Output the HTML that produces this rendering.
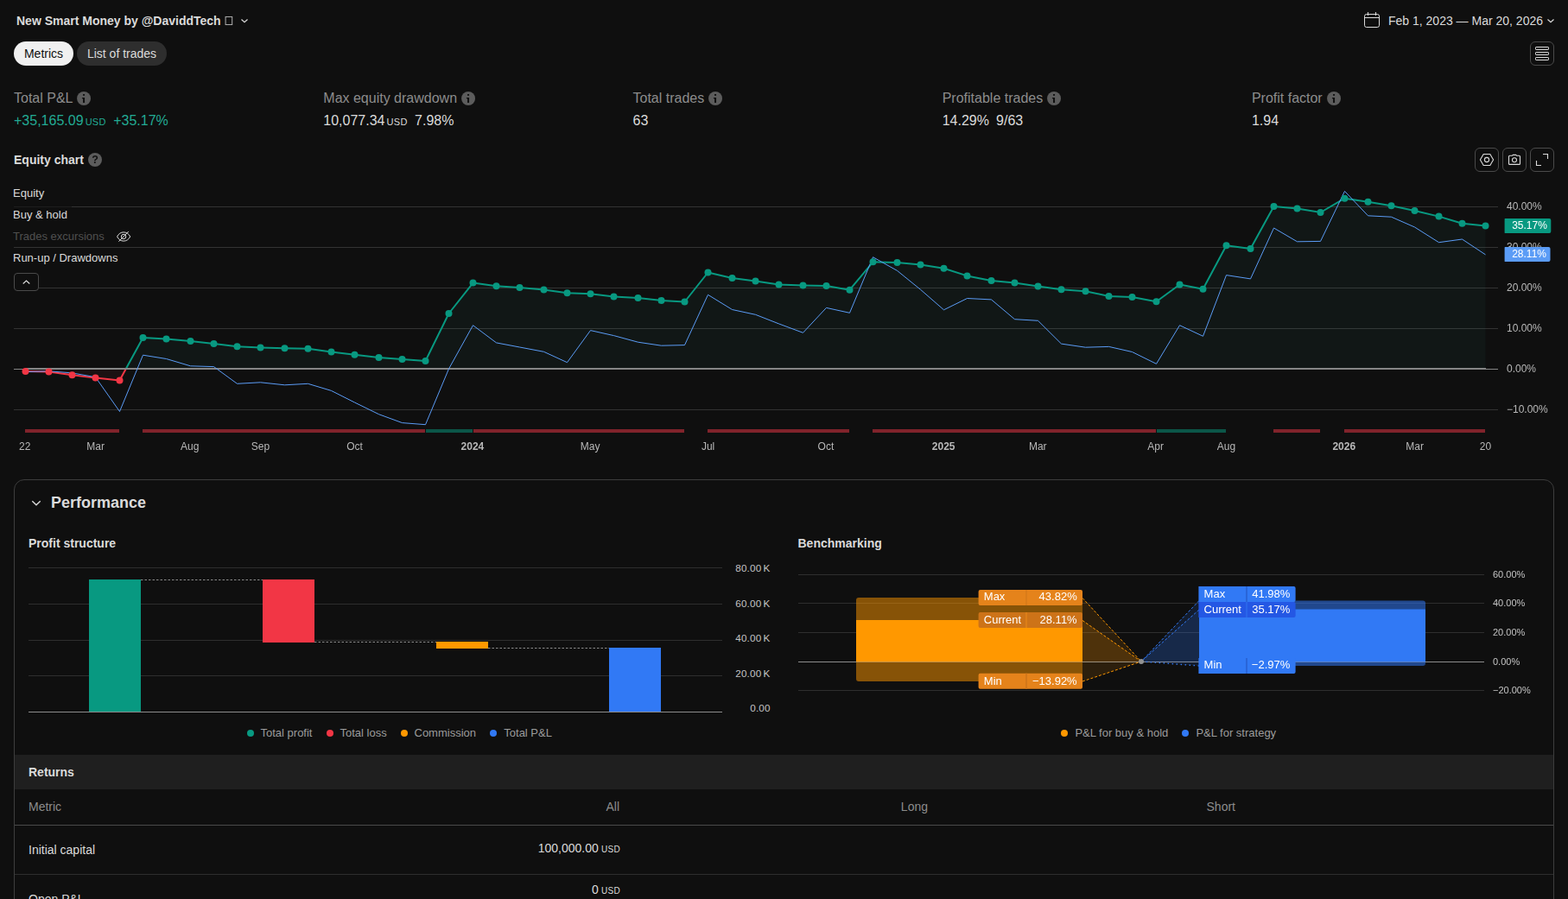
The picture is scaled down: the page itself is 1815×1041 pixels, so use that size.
<!DOCTYPE html>
<html lang="en"><head><meta charset="utf-8"><title>Strategy report</title>
<style>
*{box-sizing:border-box;margin:0;padding:0}
html,body{width:1815px;height:1041px;overflow:hidden;background:#0f0f0f;color:#dbdbdb;font-family:"Liberation Sans",sans-serif;}
body{position:relative}
.abs{position:absolute}
.gl{will-change:transform}
svg text{font-family:"Liberation Sans",sans-serif}
.t{position:absolute;white-space:nowrap;line-height:1}
.title{left:19px;top:17px;font-size:14px;font-weight:700;color:#dbdbdb}
.pill{position:absolute;top:48px;height:28px;border-radius:14px;font-size:14px;line-height:28px;text-align:center}
.lab{font-size:16px;color:#8c8c8c}
.val{font-size:16px;color:#dbdbdb}
.cur{font-size:11px;letter-spacing:.3px;margin-left:2.1px}
.pc{margin-left:8.4px}
.grn{color:#22ab94}
.btn{position:absolute;width:28px;height:28px;border:1px solid #4a4a4a;border-radius:6px}
.leg{font-size:13px;color:#dbdbdb}
.h2{font-size:14px;font-weight:700;color:#dbdbdb}
.lg{font-size:13px;color:#9c9c9c}
.dot{position:absolute;width:8.4px;height:8.4px;border-radius:50%}
.th{font-size:14px;color:#8c8c8c}
.td{font-size:14px;color:#dbdbdb}
</style></head><body>
<div class="t title">New Smart Money by @DaviddTech</div>
<svg class="abs" style="left:258px;top:16px" width="14" height="16" viewBox="0 0 14 16"><rect x="3.1" y="3.45" width="7.6" height="9.1" fill="none" stroke="#b0b0b0" stroke-width="1"/></svg>
<svg class="abs" style="left:277px;top:18px" width="12" height="12" viewBox="0 0 12 12"><path d="M2.5 4.5 6 7.7 9.5 4.5" fill="none" stroke="#dbdbdb" stroke-width="1.2"/></svg>
<div class="pill" style="left:16px;width:69px;background:#f0f0f0;color:#0f0f0f">Metrics</div>
<div class="pill" style="left:89px;width:104px;background:#2e2e2e;color:#dbdbdb">List of trades</div>

<svg class="abs" style="left:1577px;top:12px" width="22" height="22" viewBox="0 0 22 22"><g fill="none" stroke="#dbdbdb" stroke-width="1"><rect x="2.5" y="4.5" width="17" height="15" rx="2.2"/><path d="M2.5 8.5h17M6.5 2v4M15.5 2v4"/></g></svg>
<div class="t" style="left:1607px;top:17px;font-size:14px;color:#dbdbdb">Feb 1, 2023 — Mar 20, 2026</div>
<svg class="abs" style="left:1789px;top:18px" width="12" height="12" viewBox="0 0 12 12"><path d="M2.5 4.5 6 7.7 9.5 4.5" fill="none" stroke="#dbdbdb" stroke-width="1.2"/></svg>
<div class="btn" style="left:1771px;top:48px"><svg width="26" height="26" viewBox="0 0 26 26"><g fill="none" stroke="#dbdbdb" stroke-width="1"><rect x="5.5" y="5.5" width="15" height="3" rx=".6"/><rect x="5.5" y="11.5" width="15" height="3" rx=".6"/><rect x="5.5" y="17.5" width="15" height="3" rx=".6"/></g></svg></div>

<div class="t lab" style="left:16px;top:106px">Total P&amp;L</div><div class="abs" style="left:88px;top:105px"><svg class="ic" width="18" height="18" viewBox="0 0 18 18"><circle cx="9.05" cy="9" r="8" fill="#5c5c5c"/><path d="M8.05 3.95h2v1.85h-2zM6.95 8.1h3.1v5.8h-2V9.2H6.95z" fill="#0f0f0f"/></svg></div>
<div class="t val grn" style="left:16px;top:132px">+35,165.09<span class="cur">USD</span><span class="pc">+35.17%</span></div>
<div class="t lab" style="left:374.3px;top:106px">Max equity drawdown</div><div class="abs" style="left:533px;top:105px"><svg class="ic" width="18" height="18" viewBox="0 0 18 18"><circle cx="9.05" cy="9" r="8" fill="#5c5c5c"/><path d="M8.05 3.95h2v1.85h-2zM6.95 8.1h3.1v5.8h-2V9.2H6.95z" fill="#0f0f0f"/></svg></div>
<div class="t val" style="left:374.3px;top:132px">10,077.34<span class="cur">USD</span><span class="pc">7.98%</span></div>
<div class="t lab" style="left:732.5px;top:106px">Total trades</div><div class="abs" style="left:819px;top:105px"><svg class="ic" width="18" height="18" viewBox="0 0 18 18"><circle cx="9.05" cy="9" r="8" fill="#5c5c5c"/><path d="M8.05 3.95h2v1.85h-2zM6.95 8.1h3.1v5.8h-2V9.2H6.95z" fill="#0f0f0f"/></svg></div>
<div class="t val" style="left:732.5px;top:132px">63</div>
<div class="t lab" style="left:1090.7px;top:106px">Profitable trades</div><div class="abs" style="left:1211px;top:105px"><svg class="ic" width="18" height="18" viewBox="0 0 18 18"><circle cx="9.05" cy="9" r="8" fill="#5c5c5c"/><path d="M8.05 3.95h2v1.85h-2zM6.95 8.1h3.1v5.8h-2V9.2H6.95z" fill="#0f0f0f"/></svg></div>
<div class="t val" style="left:1090.7px;top:132px">14.29%<span class="pc" style="margin-left:8.1px">9/63</span></div>
<div class="t lab" style="left:1448.9px;top:106px">Profit factor</div><div class="abs" style="left:1535px;top:105px"><svg class="ic" width="18" height="18" viewBox="0 0 18 18"><circle cx="9.05" cy="9" r="8" fill="#5c5c5c"/><path d="M8.05 3.95h2v1.85h-2zM6.95 8.1h3.1v5.8h-2V9.2H6.95z" fill="#0f0f0f"/></svg></div>
<div class="t val" style="left:1448.9px;top:132px">1.94</div>

<div class="t h2" style="left:16px;top:178px">Equity chart</div><div class="abs" style="left:101px;top:176px"><svg class="ic" style="will-change:transform" width="18" height="18" viewBox="0 0 18 18"><circle cx="9" cy="9" r="8" fill="#5c5c5c"/><text x="9" y="13.3" text-anchor="middle" font-size="12.5" font-weight="700" fill="#0f0f0f">?</text></svg></div>
<div class="btn" style="left:1707px;top:171px"><svg width="26" height="26" viewBox="0 0 26 26"><g fill="none" stroke="#dbdbdb" stroke-width="1.1"><path d="M9.2 6.5h7.6l3.8 6.5-3.8 6.5H9.2L5.4 13z" stroke-linejoin="round"/><circle cx="13" cy="13" r="2.6"/></g></svg></div>
<div class="btn" style="left:1739px;top:171px"><svg width="26" height="26" viewBox="0 0 26 26"><g fill="none" stroke="#dbdbdb" stroke-width="1.1"><path d="M7.5 8.3h2.8l.9-.9h3.600l.9.900h2.800a1 1 0 0 1 1 1v8.100a1 1 0 0 1-1 1H7.500a1 1 0 0 1-1-1V9.300a1 1 0 0 1 1-1z" stroke-linejoin="round"/><circle cx="13" cy="13.300" r="2.500"/></g></svg></div>
<div class="btn" style="left:1771px;top:171px"><svg width="26" height="26" viewBox="0 0 26 26"><g fill="none" stroke="#dbdbdb" stroke-width="1.1"><path d="M14 6.5h5.5V12M12 19.5H6.5V14"/></g></svg></div>

<svg class="abs" style="left:0;top:200px" width="1815" height="340" viewBox="0 200 1815 340">
<line x1="16" x2="1734" y1="239.5" y2="239.5" stroke="#333" stroke-width="1"/>
<line x1="16" x2="1734" y1="286.5" y2="286.5" stroke="#333" stroke-width="1"/>
<line x1="16" x2="1734" y1="333.5" y2="333.5" stroke="#333" stroke-width="1"/>
<line x1="16" x2="1734" y1="380.5" y2="380.5" stroke="#333" stroke-width="1"/>
<line x1="16" x2="1734" y1="474.5" y2="474.5" stroke="#333" stroke-width="1"/>
<path d="M29.5,427.0 L29.5,430.1 L56.5,430.6 L83.5,434.2 L110.5,437.5 L138.5,440.5 L145.8,427.0 Z" fill="#f23645" fill-opacity="0.05"/>
<path d="M29.4,427.0 L145.8,427.0 L145.8,512 L29.4,512Z" fill="#f23645" fill-opacity="0.0"/>
<path d="M145.8,427.0 L165.5,390.9 L192.5,392.6 L220.5,395.0 L247.5,398.0 L274.5,401.2 L301.5,402.5 L329.5,403.3 L356.5,403.8 L383.5,407.6 L410.5,410.7 L438.5,413.9 L465.5,416.0 L492.5,418.0 L519.5,363.0 L547.5,327.6 L574.5,331.2 L601.5,332.9 L629.5,335.4 L656.5,339.2 L683.5,340.3 L710.5,343.5 L738.5,345.1 L765.5,347.9 L792.5,349.5 L819.5,315.5 L847.5,322.0 L874.5,325.6 L901.5,329.6 L929.5,330.6 L956.5,331.1 L983.5,335.7 L1010.5,303.3 L1038.5,304.1 L1065.5,306.4 L1092.5,310.8 L1119.5,319.4 L1147.5,324.9 L1174.5,327.5 L1201.5,331.5 L1228.5,335.3 L1256.5,337.3 L1283.5,342.9 L1310.5,344.0 L1338.5,349.3 L1365.5,329.5 L1392.5,334.8 L1419.5,284.2 L1447.5,287.9 L1474.5,238.9 L1501.5,241.4 L1528.5,246.0 L1556.5,229.7 L1583.5,233.8 L1610.5,238.2 L1637.5,244.0 L1665.5,250.6 L1692.5,258.7 L1719.5,261.5 L1719.5,427.0 Z" fill="#309484" fill-opacity="0.06"/>
<path d="M29.5,430.1 L56.5,430.6 L83.5,434.2 L110.5,437.5 L138.5,440.5 L145.8,427.0" fill="none" stroke="#f23645" stroke-width="2" stroke-linejoin="round"/>
<path d="M145.8,427.0 L165.5,390.9 L192.5,392.6 L220.5,395.0 L247.5,398.0 L274.5,401.2 L301.5,402.5 L329.5,403.3 L356.5,403.8 L383.5,407.6 L410.5,410.7 L438.5,413.9 L465.5,416.0 L492.5,418.0 L519.5,363.0 L547.5,327.6 L574.5,331.2 L601.5,332.9 L629.5,335.4 L656.5,339.2 L683.5,340.3 L710.5,343.5 L738.5,345.1 L765.5,347.9 L792.5,349.5 L819.5,315.5 L847.5,322.0 L874.5,325.6 L901.5,329.6 L929.5,330.6 L956.5,331.1 L983.5,335.7 L1010.5,303.3 L1038.5,304.1 L1065.5,306.4 L1092.5,310.8 L1119.5,319.4 L1147.5,324.9 L1174.5,327.5 L1201.5,331.5 L1228.5,335.3 L1256.5,337.3 L1283.5,342.9 L1310.5,344.0 L1338.5,349.3 L1365.5,329.5 L1392.5,334.8 L1419.5,284.2 L1447.5,287.9 L1474.5,238.9 L1501.5,241.4 L1528.5,246.0 L1556.5,229.7 L1583.5,233.8 L1610.5,238.2 L1637.5,244.0 L1665.5,250.6 L1692.5,258.7 L1719.5,261.5" fill="none" stroke="#089981" stroke-width="2" stroke-linejoin="round"/>
<line x1="29" x2="1720" y1="426.5" y2="426.5" stroke="#868686" stroke-width="1"/>
<line x1="16" x2="1734" y1="427.5" y2="427.5" stroke="#868686" stroke-width="1"/>
<path d="M29.5,430.6 L56.5,429.8 L83.5,431.9 L110.5,436.7 L138.5,476.5 L165.5,411.2 L192.5,415.5 L220.5,423.8 L247.5,424.6 L274.5,444.3 L301.5,442.8 L329.5,445.8 L356.5,444.3 L383.5,452.4 L410.5,466.0 L438.5,479.7 L465.5,489.6 L492.5,491.7 L519.5,427.1 L547.5,376.7 L574.5,396.9 L601.5,402.0 L629.5,407.3 L656.5,419.7 L683.5,382.6 L710.5,388.6 L738.5,396.2 L765.5,400.2 L792.5,399.6 L819.5,341.3 L847.5,358.5 L874.5,364.3 L901.5,374.9 L929.5,385.3 L956.5,356.4 L983.5,362.3 L1010.5,297.7 L1038.5,313.4 L1065.5,335.3 L1092.5,358.8 L1119.5,345.5 L1147.5,346.9 L1174.5,369.7 L1201.5,371.3 L1228.5,398.1 L1256.5,402.2 L1283.5,401.4 L1310.5,407.5 L1338.5,421.3 L1365.5,376.7 L1392.5,389.3 L1419.5,318.6 L1447.5,322.9 L1474.5,264.0 L1501.5,279.8 L1528.5,279.4 L1556.5,221.4 L1583.5,249.8 L1610.5,251.2 L1637.5,263.0 L1665.5,280.7 L1692.5,277.0 L1719.5,294.9" fill="none" stroke="#5b9cf6" stroke-width="1" stroke-linejoin="miter"/>
<circle cx="29.5" cy="430.1" r="4" fill="#f23645"/>
<circle cx="56.5" cy="430.6" r="4" fill="#f23645"/>
<circle cx="83.5" cy="434.2" r="4" fill="#f23645"/>
<circle cx="110.5" cy="437.5" r="4" fill="#f23645"/>
<circle cx="138.5" cy="440.5" r="4" fill="#f23645"/>
<circle cx="165.5" cy="390.9" r="4" fill="#089981"/>
<circle cx="192.5" cy="392.6" r="4" fill="#089981"/>
<circle cx="220.5" cy="395.0" r="4" fill="#089981"/>
<circle cx="247.5" cy="398.0" r="4" fill="#089981"/>
<circle cx="274.5" cy="401.2" r="4" fill="#089981"/>
<circle cx="301.5" cy="402.5" r="4" fill="#089981"/>
<circle cx="329.5" cy="403.3" r="4" fill="#089981"/>
<circle cx="356.5" cy="403.8" r="4" fill="#089981"/>
<circle cx="383.5" cy="407.6" r="4" fill="#089981"/>
<circle cx="410.5" cy="410.7" r="4" fill="#089981"/>
<circle cx="438.5" cy="413.9" r="4" fill="#089981"/>
<circle cx="465.5" cy="416.0" r="4" fill="#089981"/>
<circle cx="492.5" cy="418.0" r="4" fill="#089981"/>
<circle cx="519.5" cy="363.0" r="4" fill="#089981"/>
<circle cx="547.5" cy="327.6" r="4" fill="#089981"/>
<circle cx="574.5" cy="331.2" r="4" fill="#089981"/>
<circle cx="601.5" cy="332.9" r="4" fill="#089981"/>
<circle cx="629.5" cy="335.4" r="4" fill="#089981"/>
<circle cx="656.5" cy="339.2" r="4" fill="#089981"/>
<circle cx="683.5" cy="340.3" r="4" fill="#089981"/>
<circle cx="710.5" cy="343.5" r="4" fill="#089981"/>
<circle cx="738.5" cy="345.1" r="4" fill="#089981"/>
<circle cx="765.5" cy="347.9" r="4" fill="#089981"/>
<circle cx="792.5" cy="349.5" r="4" fill="#089981"/>
<circle cx="819.5" cy="315.5" r="4" fill="#089981"/>
<circle cx="847.5" cy="322.0" r="4" fill="#089981"/>
<circle cx="874.5" cy="325.6" r="4" fill="#089981"/>
<circle cx="901.5" cy="329.6" r="4" fill="#089981"/>
<circle cx="929.5" cy="330.6" r="4" fill="#089981"/>
<circle cx="956.5" cy="331.1" r="4" fill="#089981"/>
<circle cx="983.5" cy="335.7" r="4" fill="#089981"/>
<circle cx="1010.5" cy="303.3" r="4" fill="#089981"/>
<circle cx="1038.5" cy="304.1" r="4" fill="#089981"/>
<circle cx="1065.5" cy="306.4" r="4" fill="#089981"/>
<circle cx="1092.5" cy="310.8" r="4" fill="#089981"/>
<circle cx="1119.5" cy="319.4" r="4" fill="#089981"/>
<circle cx="1147.5" cy="324.9" r="4" fill="#089981"/>
<circle cx="1174.5" cy="327.5" r="4" fill="#089981"/>
<circle cx="1201.5" cy="331.5" r="4" fill="#089981"/>
<circle cx="1228.5" cy="335.3" r="4" fill="#089981"/>
<circle cx="1256.5" cy="337.3" r="4" fill="#089981"/>
<circle cx="1283.5" cy="342.9" r="4" fill="#089981"/>
<circle cx="1310.5" cy="344.0" r="4" fill="#089981"/>
<circle cx="1338.5" cy="349.3" r="4" fill="#089981"/>
<circle cx="1365.5" cy="329.5" r="4" fill="#089981"/>
<circle cx="1392.5" cy="334.8" r="4" fill="#089981"/>
<circle cx="1419.5" cy="284.2" r="4" fill="#089981"/>
<circle cx="1447.5" cy="287.9" r="4" fill="#089981"/>
<circle cx="1474.5" cy="238.9" r="4" fill="#089981"/>
<circle cx="1501.5" cy="241.4" r="4" fill="#089981"/>
<circle cx="1528.5" cy="246.0" r="4" fill="#089981"/>
<circle cx="1556.5" cy="229.7" r="4" fill="#089981"/>
<circle cx="1583.5" cy="233.8" r="4" fill="#089981"/>
<circle cx="1610.5" cy="238.2" r="4" fill="#089981"/>
<circle cx="1637.5" cy="244.0" r="4" fill="#089981"/>
<circle cx="1665.5" cy="250.6" r="4" fill="#089981"/>
<circle cx="1692.5" cy="258.7" r="4" fill="#089981"/>
<circle cx="1719.5" cy="261.5" r="4" fill="#089981"/>
<rect x="29" y="497" width="109" height="4" fill="#80232b"/>
<rect x="165" y="497" width="327" height="4" fill="#80232b"/>
<rect x="493" y="497" width="54" height="4" fill="#0b5648"/>
<rect x="548" y="497" width="244" height="4" fill="#80232b"/>
<rect x="819" y="497" width="164" height="4" fill="#80232b"/>
<rect x="1010" y="497" width="328" height="4" fill="#80232b"/>
<rect x="1339" y="497" width="80" height="4" fill="#0b5648"/>
<rect x="1474" y="497" width="54" height="4" fill="#80232b"/>
<rect x="1556" y="497" width="163" height="4" fill="#80232b"/>
</svg>
<svg class="abs gl" style="left:0;top:508px" width="1815" height="24" viewBox="0 508 1815 24">
<text x="28.8" y="521" text-anchor="middle" font-size="12" fill="#b8b8b8">22</text>
<text x="110.6" y="521" text-anchor="middle" font-size="12" fill="#b8b8b8">Mar</text>
<text x="219.7" y="521" text-anchor="middle" font-size="12" fill="#b8b8b8">Aug</text>
<text x="301.5" y="521" text-anchor="middle" font-size="12" fill="#b8b8b8">Sep</text>
<text x="410.5" y="521" text-anchor="middle" font-size="12" fill="#b8b8b8">Oct</text>
<text x="546.9" y="521" text-anchor="middle" font-size="12" fill="#b8b8b8" font-weight="700">2024</text>
<text x="683.2" y="521" text-anchor="middle" font-size="12" fill="#b8b8b8">May</text>
<text x="819.6" y="521" text-anchor="middle" font-size="12" fill="#b8b8b8">Jul</text>
<text x="955.9" y="521" text-anchor="middle" font-size="12" fill="#b8b8b8">Oct</text>
<text x="1092.2" y="521" text-anchor="middle" font-size="12" fill="#b8b8b8" font-weight="700">2025</text>
<text x="1201.3" y="521" text-anchor="middle" font-size="12" fill="#b8b8b8">Mar</text>
<text x="1337.7" y="521" text-anchor="middle" font-size="12" fill="#b8b8b8">Apr</text>
<text x="1419.5" y="521" text-anchor="middle" font-size="12" fill="#b8b8b8">Aug</text>
<text x="1555.8" y="521" text-anchor="middle" font-size="12" fill="#b8b8b8" font-weight="700">2026</text>
<text x="1637.6" y="521" text-anchor="middle" font-size="12" fill="#b8b8b8">Mar</text>
<text x="1719.4" y="521" text-anchor="middle" font-size="12" fill="#b8b8b8">20</text>
</svg>
<svg class="abs gl" style="left:1736px;top:226px" width="79" height="260" viewBox="1736 226 79 260">
<text x="1744" y="242.5" font-size="12" fill="#b8b8b8">40.00%</text>
<text x="1744" y="289.5" font-size="12" fill="#b8b8b8">30.00%</text>
<text x="1744" y="336.5" font-size="12" fill="#b8b8b8">20.00%</text>
<text x="1744" y="383.5" font-size="12" fill="#b8b8b8">10.00%</text>
<text x="1744" y="430.5" font-size="12" fill="#b8b8b8">0.00%</text>
<text x="1744" y="477.5" font-size="12" fill="#b8b8b8">−10.00%</text>
<path d="M1742.2,253 H1793.3 a2,2 0 0 1 2,2 V268 a2,2 0 0 1 -2,2 H1742.2 a.6,.6 0 0 1 -.6,-.6 V253.6 a.6,.6 0 0 1 .6,-.6Z" fill="#089981"/>
<text x="1750.2" y="264.8" font-size="12" fill="#fff">35.17%</text>
<path d="M1742.2,286 H1792.5 a2,2 0 0 1 2,2 V301 a2,2 0 0 1 -2,2 H1742.2 a.6,.6 0 0 1 -.6,-.6 V286.6 a.6,.6 0 0 1 .6,-.6Z" fill="#5b9cf6"/>
<text x="1750.2" y="297.8" font-size="12" fill="#fff">28.11%</text>
</svg>
<div class="abs" style="left:11px;top:237px;width:71.5px;height:25px;background:rgba(15,15,15,.6)"></div>
<div class="t leg" style="left:15px;top:217px">Equity</div>
<div class="t leg" style="left:15px;top:242px">Buy &amp; hold</div>
<div class="t leg" style="left:15px;top:267px;color:#4f4f4f">Trades excursions</div>
<svg class="abs" style="left:134px;top:265px" width="18" height="18" viewBox="0 0 18 18"><g fill="none" stroke="#dbdbdb" stroke-width="1"><path d="M1.6 9C3.3 5.600 5.900 3.900 9.100 3.900S15 5.600 16.700 9c-1.700 3.400-4.400 5.100-7.600 5.100S3.300 12.400 1.600 9z"/><circle cx="9.1" cy="9" r="2.700"/><path d="M3.4 14.700 14.900 2.900"/></g></svg>
<div class="t leg" style="left:15px;top:292px">Run-up / Drawdowns</div>
<div class="abs" style="left:16px;top:316px;width:29px;height:21px;border:1px solid #4a4a4a;border-radius:4px;background:#0f0f0f"><svg width="27" height="19" viewBox="0 0 27 19"><path d="M9.700 11.500 13.500 8 17.300 11.500" fill="none" stroke="#dbdbdb" stroke-width="1.2"/></svg></div>

<div class="abs" style="left:16px;top:555px;width:1783px;height:520px;border:1px solid #3d3d3d;border-radius:12px"></div>
<svg class="abs" style="left:34px;top:575px" width="16" height="14" viewBox="0 0 16 14"><path d="M3.3 5.2 8 9.700 12.700 5.200" fill="none" stroke="#dbdbdb" stroke-width="1.400"/></svg>
<div class="t" style="left:59px;top:573px;font-size:18px;font-weight:700;color:#dbdbdb">Performance</div>
<div class="t h2" style="left:33px;top:622px">Profit structure</div>
<div class="t h2" style="left:923.5px;top:622px">Benchmarking</div>
<svg class="abs" style="left:0;top:640px" width="910" height="200" viewBox="0 640 910 200">
<line x1="33" x2="836" y1="657.5" y2="657.5" stroke="#2e2e2e" stroke-width="1"/>
<line x1="33" x2="836" y1="699.5" y2="699.5" stroke="#2e2e2e" stroke-width="1"/>
<line x1="33" x2="836" y1="741.5" y2="741.5" stroke="#2e2e2e" stroke-width="1"/>
<line x1="33" x2="836" y1="782.5" y2="782.5" stroke="#2e2e2e" stroke-width="1"/>
<rect x="103" y="671" width="60" height="153" fill="#089981"/>
<rect x="304" y="671" width="60" height="73" fill="#f23645"/>
<rect x="505" y="743" width="60" height="8" fill="#ff9800"/>
<rect x="705" y="750" width="60" height="74" fill="#3179f5"/>
<line x1="163" x2="304" y1="671.5" y2="671.5" stroke="#8a8a8a" stroke-width="1" stroke-dasharray="2.5 2"/>
<line x1="364" x2="505" y1="743.5" y2="743.5" stroke="#8a8a8a" stroke-width="1" stroke-dasharray="2.5 2"/>
<line x1="565" x2="705" y1="750.5" y2="750.5" stroke="#8a8a8a" stroke-width="1" stroke-dasharray="2.5 2"/>
<line x1="33" x2="836" y1="824.5" y2="824.5" stroke="#8c8c8c" stroke-width="1"/>
<text y="662" font-size="11.7" fill="#c4c4c4"><tspan x="851.3" letter-spacing="0.16">80.00 </tspan><tspan x="883.6">K</tspan></text>
<text y="703.2" font-size="11.7" fill="#c4c4c4"><tspan x="851.3" letter-spacing="0.16">60.00 </tspan><tspan x="883.6">K</tspan></text>
<text y="742.7" font-size="11.7" fill="#c4c4c4"><tspan x="851.3" letter-spacing="0.16">40.00 </tspan><tspan x="883.6">K</tspan></text>
<text y="783.7" font-size="11.7" fill="#c4c4c4"><tspan x="851.3" letter-spacing="0.16">20.00 </tspan><tspan x="883.6">K</tspan></text>
<text x="868.3" y="823.7" font-size="11.7" letter-spacing="0.16" fill="#c4c4c4">0.00</text>
</svg>
<svg class="abs" style="left:905px;top:640px;will-change:transform" width="910" height="200" viewBox="905 640 910 200">
<line x1="924" x2="1718" y1="665.5" y2="665.5" stroke="#2e2e2e" stroke-width="1"/>
<line x1="924" x2="1718" y1="698.5" y2="698.5" stroke="#2e2e2e" stroke-width="1"/>
<line x1="924" x2="1718" y1="732.5" y2="732.5" stroke="#2e2e2e" stroke-width="1"/>
<line x1="924" x2="1718" y1="799.5" y2="799.5" stroke="#2e2e2e" stroke-width="1"/>
<line x1="924" x2="1718" y1="766.5" y2="766.5" stroke="#8c8c8c" stroke-width="1"/>
<rect x="991" y="692" width="262" height="97" rx="3" fill="#ff9800" fill-opacity="0.5"/>
<rect x="991" y="718" width="262" height="48" fill="#ff9800"/>
<path d="M1253,692 L1321,766 L1253,789Z" fill="#ff9800" fill-opacity="0.12"/>
<path d="M1253,718 L1321,766 L1253,766Z" fill="#ff9800" fill-opacity="0.16"/>
<line x1="1253" y1="692.5" x2="1321" y2="766" stroke="#ff9800" stroke-width="1" stroke-dasharray="3 2"/>
<line x1="1253" y1="718.5" x2="1321" y2="766" stroke="#ff9800" stroke-width="1" stroke-dasharray="3 2"/>
<line x1="1253" y1="789" x2="1321" y2="766" stroke="#ff9800" stroke-width="1" stroke-dasharray="3 2"/>
<rect x="1388" y="695.5" width="262" height="75.5" rx="3" fill="#3179f5" fill-opacity="0.55"/>
<rect x="1388" y="705.5" width="262" height="60.5" fill="#3179f5"/>
<path d="M1388,695.5 L1321,766 L1388,771Z" fill="#3179f5" fill-opacity="0.14"/>
<path d="M1388,706 L1321,766 L1388,766Z" fill="#3179f5" fill-opacity="0.13"/>
<line x1="1388" y1="695.5" x2="1321" y2="766" stroke="#3179f5" stroke-width="1" stroke-dasharray="3 2"/>
<line x1="1388" y1="706" x2="1321" y2="766" stroke="#3179f5" stroke-width="1" stroke-dasharray="3 2"/>
<line x1="1388" y1="771" x2="1321" y2="766" stroke="#3179f5" stroke-width="1.4" stroke-dasharray="1.5 3.5"/>
<circle cx="1321" cy="766" r="3" fill="#929292"/>
<rect x="1132.6" y="683" width="120.4" height="18" rx="2" fill="#e5831b"/>
<rect x="1187.2" y="683" width="1.6" height="18" fill="#d77a19"/>
<text x="1138.8" y="694.6" font-size="13" fill="#fff">Max</text>
<text x="1246.7" y="694.6" font-size="13" fill="#fff" text-anchor="end">43.82%</text>
<rect x="1132.6" y="709" width="120.4" height="18" rx="2" fill="#cd7318"/>
<rect x="1187.2" y="709" width="1.6" height="18" fill="#e0821a"/>
<text x="1138.8" y="721.6" font-size="13" fill="#fff">Current</text>
<text x="1246.7" y="721.6" font-size="13" fill="#fff" text-anchor="end">28.11%</text>
<rect x="1132.6" y="779.7" width="120.4" height="18" rx="2" fill="#e5831b"/>
<rect x="1187.2" y="779.7" width="1.6" height="18" fill="#cf7619"/>
<text x="1138.8" y="793.3000000000001" font-size="13" fill="#fff">Min</text>
<text x="1246.7" y="793.3000000000001" font-size="13" fill="#fff" text-anchor="end">−13.92%</text>
<path d="M1387.4,679 H1497.6000000000001 a2,2 0 0 1 2,2 V695 a2,2 0 0 1 -2,2 H1387.4Z" fill="#3179f5"/>
<rect x="1442.2" y="679" width="1.6" height="18" fill="#2860d2"/>
<text x="1393.6000000000001" y="691.6" font-size="13" fill="#fff">Max</text>
<text x="1493.3000000000002" y="691.6" font-size="13" fill="#fff" text-anchor="end">41.98%</text>
<path d="M1387.4,697 H1497.6000000000001 a2,2 0 0 1 2,2 V713 a2,2 0 0 1 -2,2 H1387.4Z" fill="#2457e4"/>
<rect x="1442.2" y="697" width="1.6" height="18" fill="#2c69ec"/>
<text x="1393.6000000000001" y="709.6" font-size="13" fill="#fff">Current</text>
<text x="1493.3000000000002" y="709.6" font-size="13" fill="#fff" text-anchor="end">35.17%</text>
<path d="M1387.4,762 H1497.6000000000001 a2,2 0 0 1 2,2 V778 a2,2 0 0 1 -2,2 H1387.4Z" fill="#3179f5"/>
<rect x="1442.2" y="762" width="1.6" height="18" fill="#2860d2"/>
<text x="1393.6000000000001" y="773.6" font-size="13" fill="#fff">Min</text>
<text x="1493.3000000000002" y="773.6" font-size="13" fill="#fff" text-anchor="end">−2.97%</text>
<text x="1728" y="669" font-size="11" fill="#c4c4c4">60.00%</text>
<text x="1728" y="702" font-size="11" fill="#c4c4c4">40.00%</text>
<text x="1728" y="736" font-size="11" fill="#c4c4c4">20.00%</text>
<text x="1728" y="770" font-size="11" fill="#c4c4c4">0.00%</text>
<text x="1728" y="803" font-size="11" fill="#c4c4c4">−20.00%</text>
</svg>
<div class="dot" style="left:286px;top:844.7px;background:#089981"></div><div class="t lg" style="left:301.5px;top:842px">Total profit</div>
<div class="dot" style="left:378px;top:844.7px;background:#f23645"></div><div class="t lg" style="left:393.5px;top:842px">Total loss</div>
<div class="dot" style="left:464px;top:844.7px;background:#ff9800"></div><div class="t lg" style="left:479.5px;top:842px">Commission</div>
<div class="dot" style="left:567px;top:844.7px;background:#3179f5"></div><div class="t lg" style="left:583.3px;top:842px">Total P&amp;L</div>
<div class="dot" style="left:1228px;top:844.7px;background:#ff9800"></div><div class="t lg" style="left:1244.4px;top:842px">P&amp;L for buy &amp; hold</div>
<div class="dot" style="left:1368px;top:844.7px;background:#3179f5"></div><div class="t lg" style="left:1384.4px;top:842px">P&amp;L for strategy</div>

<div class="abs" style="left:17px;top:874px;width:1781px;height:40px;background:#1f1f1f"></div>
<div class="t h2" style="left:33px;top:887px">Returns</div>
<div class="t th" style="left:33px;top:927px">Metric</div>
<div class="t th" style="left:517px;width:200px;text-align:right;top:927px">All</div>
<div class="t th" style="left:874px;width:200px;text-align:right;top:927px">Long</div>
<div class="t th" style="left:1230px;width:200px;text-align:right;top:927px">Short</div>
<div class="abs" style="left:17px;top:955px;width:1781px;height:1px;background:#4a4a4a"></div>
<div class="t td" style="left:33px;top:977px">Initial capital</div>
<div class="t td" style="left:418px;width:300px;text-align:right;top:975px">100,000.00<span class="cur" style="font-size:10px;margin-left:3.2px">USD</span></div>
<div class="abs" style="left:17px;top:1012px;width:1781px;height:1px;background:#2e2e2e"></div>
<div class="t td" style="left:33px;top:1034px">Open P&amp;L</div>
<div class="t td" style="left:418px;width:300px;text-align:right;top:1023px">0<span class="cur" style="font-size:10px;margin-left:3.2px">USD</span></div>
</body></html>
